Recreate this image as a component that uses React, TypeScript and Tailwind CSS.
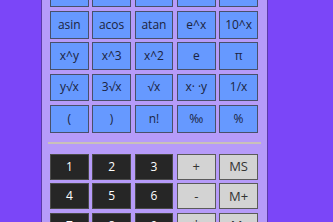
import React from "react";

const sciRows = [
  ["sin", "cos", "tan", "ln", "log"],
  ["asin", "acos", "atan", "e^x", "10^x"],
  ["x^y", "x^3", "x^2", "e", "π"],
  ["y√x", "3√x", "√x", "x· ·y", "1/x"],
  ["(", ")", "n!", "‰", "%"],
];

type K = { label: string; kind: "num" | "op" };
const numRows: K[][] = [
  [
    { label: "1", kind: "num" },
    { label: "2", kind: "num" },
    { label: "3", kind: "num" },
    { label: "+", kind: "op" },
    { label: "MS", kind: "op" },
  ],
  [
    { label: "4", kind: "num" },
    { label: "5", kind: "num" },
    { label: "6", kind: "num" },
    { label: "-", kind: "op" },
    { label: "M+", kind: "op" },
  ],
  [
    { label: "7", kind: "num" },
    { label: "8", kind: "num" },
    { label: "9", kind: "num" },
    { label: "*", kind: "op" },
    { label: "M-", kind: "op" },
  ],
];

export default function App() {
  return (
    <div
      className="w-[333px] h-[222px] overflow-hidden bg-[#7b46f8]"
      style={{ fontFamily: '"Open Sans", "Noto Sans", sans-serif' }}
    >
      <div className="ml-[41px] mt-[-30px] w-[227px] bg-[#b69bf9] border-l border-r border-[#5b3aa8] pt-[9.67px] pb-[20px]">
        <div className="grid grid-cols-[repeat(5,38.67px)] auto-rows-[27.67px] gap-x-[3.67px] gap-y-[3.67px] pl-[8px]">
          {sciRows.flat().map((l, i) => (
            <div
              key={i}
              className="flex items-center justify-center bg-[#6699ff] border border-[#48506a] text-[12px] text-[#1b2440] leading-none"
            >
              {l}
            </div>
          ))}
        </div>
        <div className="mx-[6px] mt-[9.67px] h-[2px] bg-[#c9c1b9]" />
        <div className="grid grid-cols-[repeat(5,38.67px)] auto-rows-[26px] gap-x-[3.67px] gap-y-[3.5px] pl-[8px] mt-[9.3px]">
          {numRows.flat().map((k, i) => (
            <div
              key={i}
              className={
                k.kind === "num"
                  ? "flex items-center justify-center bg-[#262626] border border-[#4a4a4a] text-[12px] text-white leading-none"
                  : "flex items-center justify-center bg-[#d3d3d3] border border-[#5a5a5a] text-[13px] text-[#333] leading-none"
              }
            >
              {k.label}
            </div>
          ))}
        </div>
      </div>
    </div>
  );
}
